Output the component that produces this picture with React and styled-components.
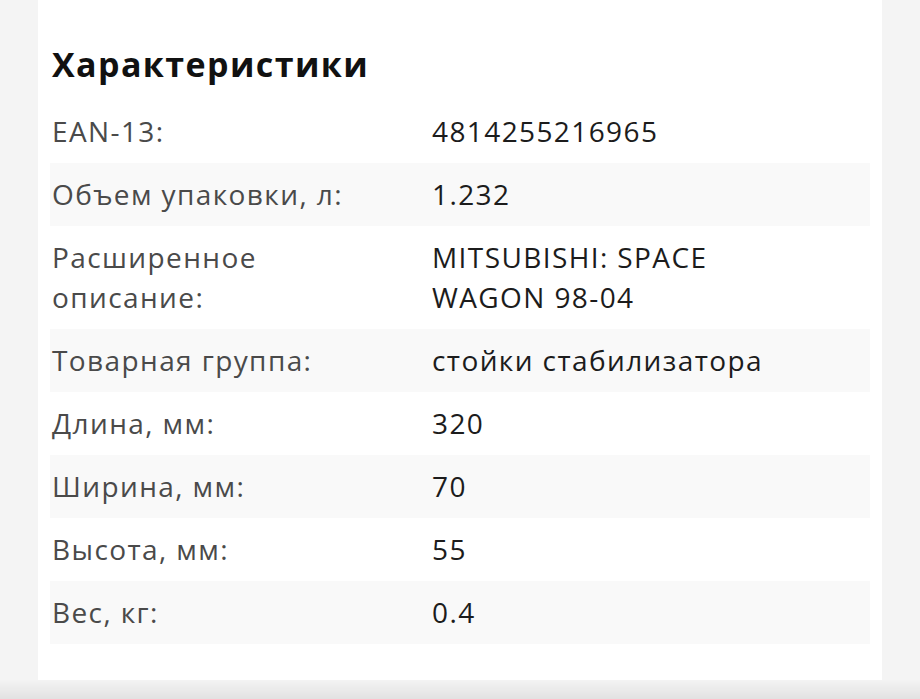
import React from 'react'
import styled, { createGlobalStyle } from 'styled-components'

const GlobalStyle = createGlobalStyle`
  html, body {
    margin: 0;
    padding: 0;
    background: #f4f4f4;
  }
  body {
    font-family: "Open Sans", "Liberation Sans", sans-serif;
    overflow: hidden;
  }
`;

const Page = styled.div`
  height: 699px;
  padding: 0 38px;
  box-sizing: border-box;
`;

const Card = styled.section`
  background: #ffffff;
  height: 680px;
  padding: 38px 12px 0 12px;
  box-sizing: border-box;
`;

const Title = styled.h2`
  margin: 0 0 10px 2px;
  font-size: 34px;
  letter-spacing: 1.4px;
  line-height: 52px;
  font-weight: 700;
  color: #111;
`;

const Table = styled.div`
  display: flex;
  flex-direction: column;
`;

const Row = styled.div`
  display: grid;
  grid-template-columns: 380px 1fr;
  padding: 11px 0 12px 2px;
  background: ${({ $shaded }) => ($shaded ? '#f9f9f9' : 'transparent')};
  font-size: 28px;
  letter-spacing: 1.4px;
  line-height: 40px;
`;

const Label = styled.div`
  color: #4a4a4a;
  padding-right: 60px;
`;

const Value = styled.div`
  color: #1c1c1c;
  padding-right: 90px;
`;

const BottomShade = styled.div`
  position: fixed;
  left: 0;
  right: 0;
  bottom: 0;
  height: 20px;
  background: linear-gradient(rgba(0, 0, 0, 0), rgba(0, 0, 0, 0.07));
  pointer-events: none;
`;

const specs = [
  ['EAN-13:', '4814255216965'],
  ['Объем упаковки, л:', '1.232'],
  ['Расширенное описание:', 'MITSUBISHI: SPACE WAGON 98-04'],
  ['Товарная группа:', 'стойки стабилизатора'],
  ['Длина, мм:', '320'],
  ['Ширина, мм:', '70'],
  ['Высота, мм:', '55'],
  ['Вес, кг:', '0.4'],
]

const App = () => {
  return (
    <Page>
      <GlobalStyle />
      <Card>
        <Title>Характеристики</Title>
        <Table>
          {specs.map(([label, value], i) => (
            <Row key={label} $shaded={i % 2 === 1}>
              <Label>{label}</Label>
              <Value>{value}</Value>
            </Row>
          ))}
        </Table>
      </Card>
      <BottomShade />
    </Page>
  )
}

export default App
